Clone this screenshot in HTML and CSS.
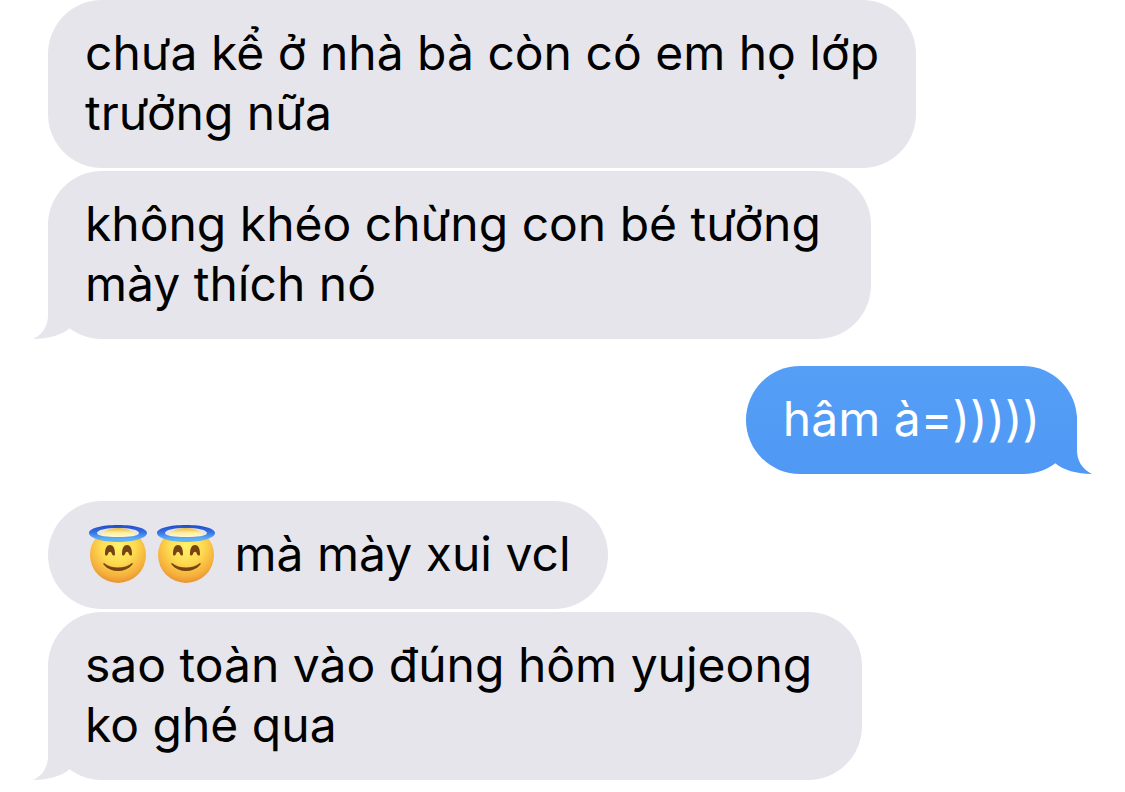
FILE: index.html
```html
<!DOCTYPE html>
<html lang="vi">
<head>
<meta charset="utf-8">
<meta name="viewport" content="width=device-width, initial-scale=1">
<title>Tin nhắn</title>
<link rel="stylesheet" href="styles.css">
</head>
<body>
<svg class="defs" aria-hidden="true">
  <defs>
    <radialGradient id="face" gradientUnits="userSpaceOnUse" cx="30" cy="22" r="38">
      <stop offset="0" stop-color="#fff26a"/>
      <stop offset=".45" stop-color="#fddb50"/>
      <stop offset=".8" stop-color="#f6b03c"/>
      <stop offset="1" stop-color="#e48e30"/>
    </radialGradient>
    <linearGradient id="glow" x1="0" y1="0" x2="0" y2="1">
      <stop offset="0" stop-color="#eab63e"/>
      <stop offset=".5" stop-color="#fff0a0"/>
      <stop offset="1" stop-color="#fffbe0"/>
    </linearGradient>
    <linearGradient id="halo" x1="0" y1="0" x2="0" y2="1">
      <stop offset="0" stop-color="#1f49c6"/>
      <stop offset=".45" stop-color="#3974e6"/>
      <stop offset=".8" stop-color="#5caef8"/>
      <stop offset="1" stop-color="#62b6f6"/>
    </linearGradient>
    <linearGradient id="sent-tail" gradientUnits="userSpaceOnUse" x1="0" y1="-50" x2="0" y2="58">
      <stop offset="0" stop-color="#559ff7"/>
      <stop offset="1" stop-color="#4f98f4"/>
    </linearGradient>
    <symbol id="angel" viewBox="0 0 60 60">
      <circle cx="30" cy="31" r="28" fill="url(#face)"/>
      <ellipse cx="30" cy="9" rx="22" ry="5" fill="#e6e5eb"/>
      <path d="M12 11Q18 4 30 4T48 11Q40 14 30 14T12 11Z" fill="url(#glow)"/>
      <path fill-rule="evenodd" d="M1 9C1 4 14 1 30 1S59 4 59 9S46 18 30 18S1 14 1 9ZM9 9C9 12 18 13 30 13S51 12 51 9S42 4 30 4S9 6 9 9Z" fill="url(#halo)"/>
      <path d="M17 30C17 24 19 21 22 21S27 24 27 30C27 32 25 32 24 30C23 27 21 27 20 30C19 32 17 32 17 30ZM34 30C34 24 36 21 39 21S44 24 44 30C44 32 42 32 41 30C40 27 38 27 37 30C36 32 34 32 34 30Z" fill="#764312"/>
      <path d="M16 39C15 39 15 40 16 41C23 49 37 49 44 41C45 40 45 39 44 39C37 45 23 45 16 39Z" fill="#764312"/>
    </symbol>
    <symbol id="tail" viewBox="0 0 37 58">
      <path d="M15 0V34C15 45 10 53 0 58C15 58 29 54 37 47V0Z"/>
    </symbol>
  </defs>
</svg>
<main class="thread">
  <section class="group">
    <p class="bubble received">chưa kể ở nhà bà còn có em họ lớp<br>trưởng nữa</p>
    <p class="bubble received wide">không khéo chừng con bé tưởng<br>mày thích nó<svg class="tail" aria-hidden="true"><use href="#tail"/></svg></p>
  </section>
  <section class="group">
    <p class="bubble sent">hâm à=)))))<svg class="tail" aria-hidden="true"><use href="#tail"/></svg></p>
  </section>
  <section class="group">
    <p class="bubble received"><svg class="emoji" role="img" aria-label="😇"><use href="#angel"/></svg><svg class="emoji" role="img" aria-label="😇"><use href="#angel"/></svg> mà mày xui vcl</p>
    <p class="bubble received wide">sao toàn vào đúng hôm yujeong<br>ko ghé qua<svg class="tail" aria-hidden="true"><use href="#tail"/></svg></p>
  </section>
</main>
</body>
</html>
```
FILE: styles.css
```css
* { box-sizing: border-box; }
body { margin: 0; background: #fff; font-family: Inter, "Noto Sans", sans-serif; }
.defs { position: absolute; width: 0; height: 0; }
.thread { display: flex; flex-direction: column; gap: 27px; padding: 0 48px 12px; }
.group { display: flex; flex-direction: column; align-items: flex-start; gap: 3px; }
.bubble { position: relative; margin: 0; padding: 23px 37px 25px; border-radius: 54px; font-size: 48px; line-height: 60px; }
.received { background: #e6e5eb; color: #000; }
.wide { padding-right: 50px; }
.sent { align-self: flex-end; background: linear-gradient(#559ff7, #4f98f4); color: #fff; }
.tail { position: absolute; left: -15px; bottom: 0; width: 37px; height: 58px; fill: #e6e5eb; }
.sent .tail { left: auto; right: -15px; transform: scaleX(-1); fill: url(#sent-tail); }
.emoji { width: 60px; height: 60px; margin: 0 5px 0 3px; vertical-align: -13px; }
```
